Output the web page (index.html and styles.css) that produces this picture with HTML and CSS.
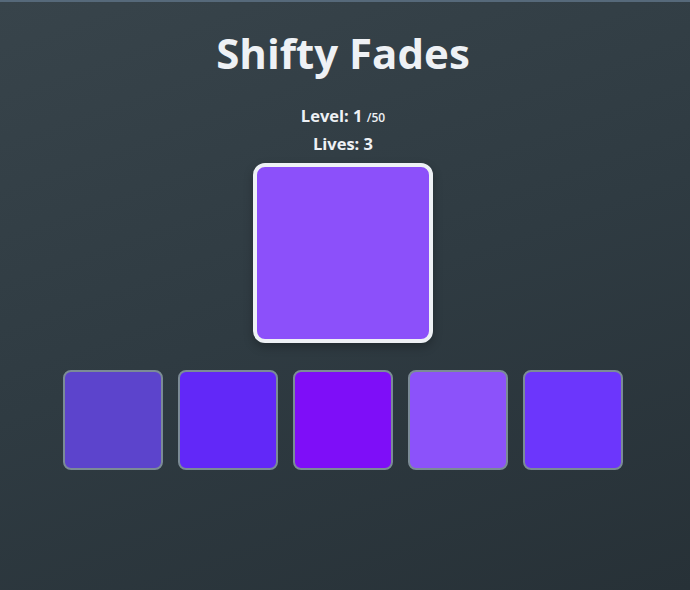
FILE: index.html
```html
<!DOCTYPE html>
<html>
<head>
<meta charset="utf-8">
<link rel="stylesheet" href="styles.css">
</head>
<body>
<main class="game">
  <h1 class="title">Shifty Fades</h1>
  <div class="stats">
    <div class="stat">Level: 1 <span class="max">/50</span></div>
    <div class="stat">Lives: 3</div>
  </div>
  <div class="target"></div>
  <div class="choices">
    <div class="choice c1"></div>
    <div class="choice c2"></div>
    <div class="choice c3"></div>
    <div class="choice c4"></div>
    <div class="choice c5"></div>
  </div>
</main>
</body>
</html>
```
FILE: styles.css
```css
html, body {
  margin: 0;
  height: 100%;
}
body {
  box-sizing: border-box;
  border-top: 2px solid #56697a;
  background: linear-gradient(160deg, #38444b 0%, #2f3b42 50%, #273137 100%);
  font-family: "Open Sans", "Noto Sans", sans-serif;
  color: #eef1f5;
  overflow: hidden;
}
.game {
  display: flex;
  flex-direction: column;
  align-items: center;
  padding-right: 4px;
}
.title {
  margin: 23px 0 0;
  font-size: 42px;
  font-weight: 700;
  line-height: 56px;
}
.stats {
  margin-top: 22px;
  display: flex;
  flex-direction: column;
  align-items: center;
  font-size: 16.5px;
  font-weight: 700;
  line-height: 26px;
}
.max {
  font-size: 12px;
  font-weight: 600;
}
.target {
  margin-top: 6px;
  width: 172px;
  height: 172px;
  border: 4px solid #eef1f5;
  border-radius: 12px;
  background: #8c50fa;
  box-shadow: 0 4px 10px rgba(0, 0, 0, 0.25);
}
.choices {
  margin-top: 27px;
  display: flex;
  gap: 15px;
}
.choice {
  width: 96px;
  height: 96px;
  border: 2px solid #7b8b96;
  border-radius: 8px;
}
.c1 { background: #5c44cc; }
.c2 { background: #6228f8; }
.c3 { background: #7e0ef8; }
.c4 { background: #8c52fa; }
.c5 { background: #6c36fc; }
```
